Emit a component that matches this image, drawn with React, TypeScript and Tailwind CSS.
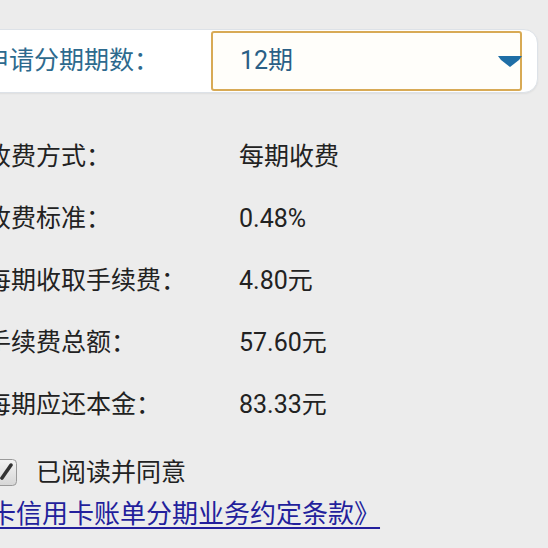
import React from "react";

const rows: { label: string; value: string }[] = [
  { label: "收费方式：", value: "每期收费" },
  { label: "收费标准：", value: "0.48%" },
  { label: "每期收取手续费：", value: "4.80元" },
  { label: "手续费总额：", value: "57.60元" },
  { label: "每期应还本金：", value: "83.33元" },
];

export default function App() {
  return (
    <div className="h-[548px] w-[548px] overflow-hidden bg-[#ececec] font-['Roboto','Noto_Sans_CJK_SC',sans-serif] text-[25px] text-[#222]">
      <div className="pt-[29px]">
        <div className="-ml-[30px] flex h-[64px] w-[568px] items-center rounded-r-[14px] border border-[#dde2e8] bg-white pl-[13px] pr-[15px] shadow-[0_1px_2px_rgba(0,0,0,0.06)]">
          <span className="w-[227px] shrink-0 text-[#2d6a8e]">申请分期期数：</span>
          <div className="flex h-[60px] flex-1 items-center justify-between rounded-[3px] border-2 border-[#d8aa55] bg-[#fffefa] pl-[27px]">
            <span className="text-[#2a5f86]">12期</span>
            <svg width="24" height="14" viewBox="0 0 24 14" className="-mr-[2px]">
              <path d="M0 2 L24 2 L21 6 L12 13 L3 6 Z" fill="#1f6ea6" />
            </svg>
          </div>
        </div>

        <div className="-ml-[14px] mt-[33px]">
          {rows.map((row) => (
            <div key={row.label} className="flex h-[62px] items-center">
              <span className="w-[253px] shrink-0">{row.label}</span>
              <span>{row.value}</span>
            </div>
          ))}
        </div>

        <div className="-ml-[10px] mt-[18px] flex items-center">
          <svg width="27" height="27" viewBox="0 0 27 27">
            <defs>
              <linearGradient id="cb" x1="0" y1="0" x2="0" y2="1">
                <stop offset="0" stopColor="#f4f4f4" />
                <stop offset="1" stopColor="#d6d6d6" />
              </linearGradient>
            </defs>
            <rect x="0.5" y="0.5" width="26" height="26" rx="4" fill="url(#cb)" stroke="#9a9a9a" />
            <path d="M12 19 L21 6" stroke="#333" strokeWidth="3.5" strokeLinecap="round" />
            <path d="M10 19 L12 21 L13 18 Z" fill="#333" />
          </svg>
          <span className="ml-[19px]">已阅读并同意</span>
        </div>

        <div className="-ml-[62px] mt-[5px] text-[26px] leading-[34px]">
          <a href="#" className="text-[#231f9c] underline decoration-[2px] underline-offset-[4px]">
            《龙卡信用卡账单分期业务约定条款》 
          </a>
        </div>
      </div>
    </div>
  );
}
